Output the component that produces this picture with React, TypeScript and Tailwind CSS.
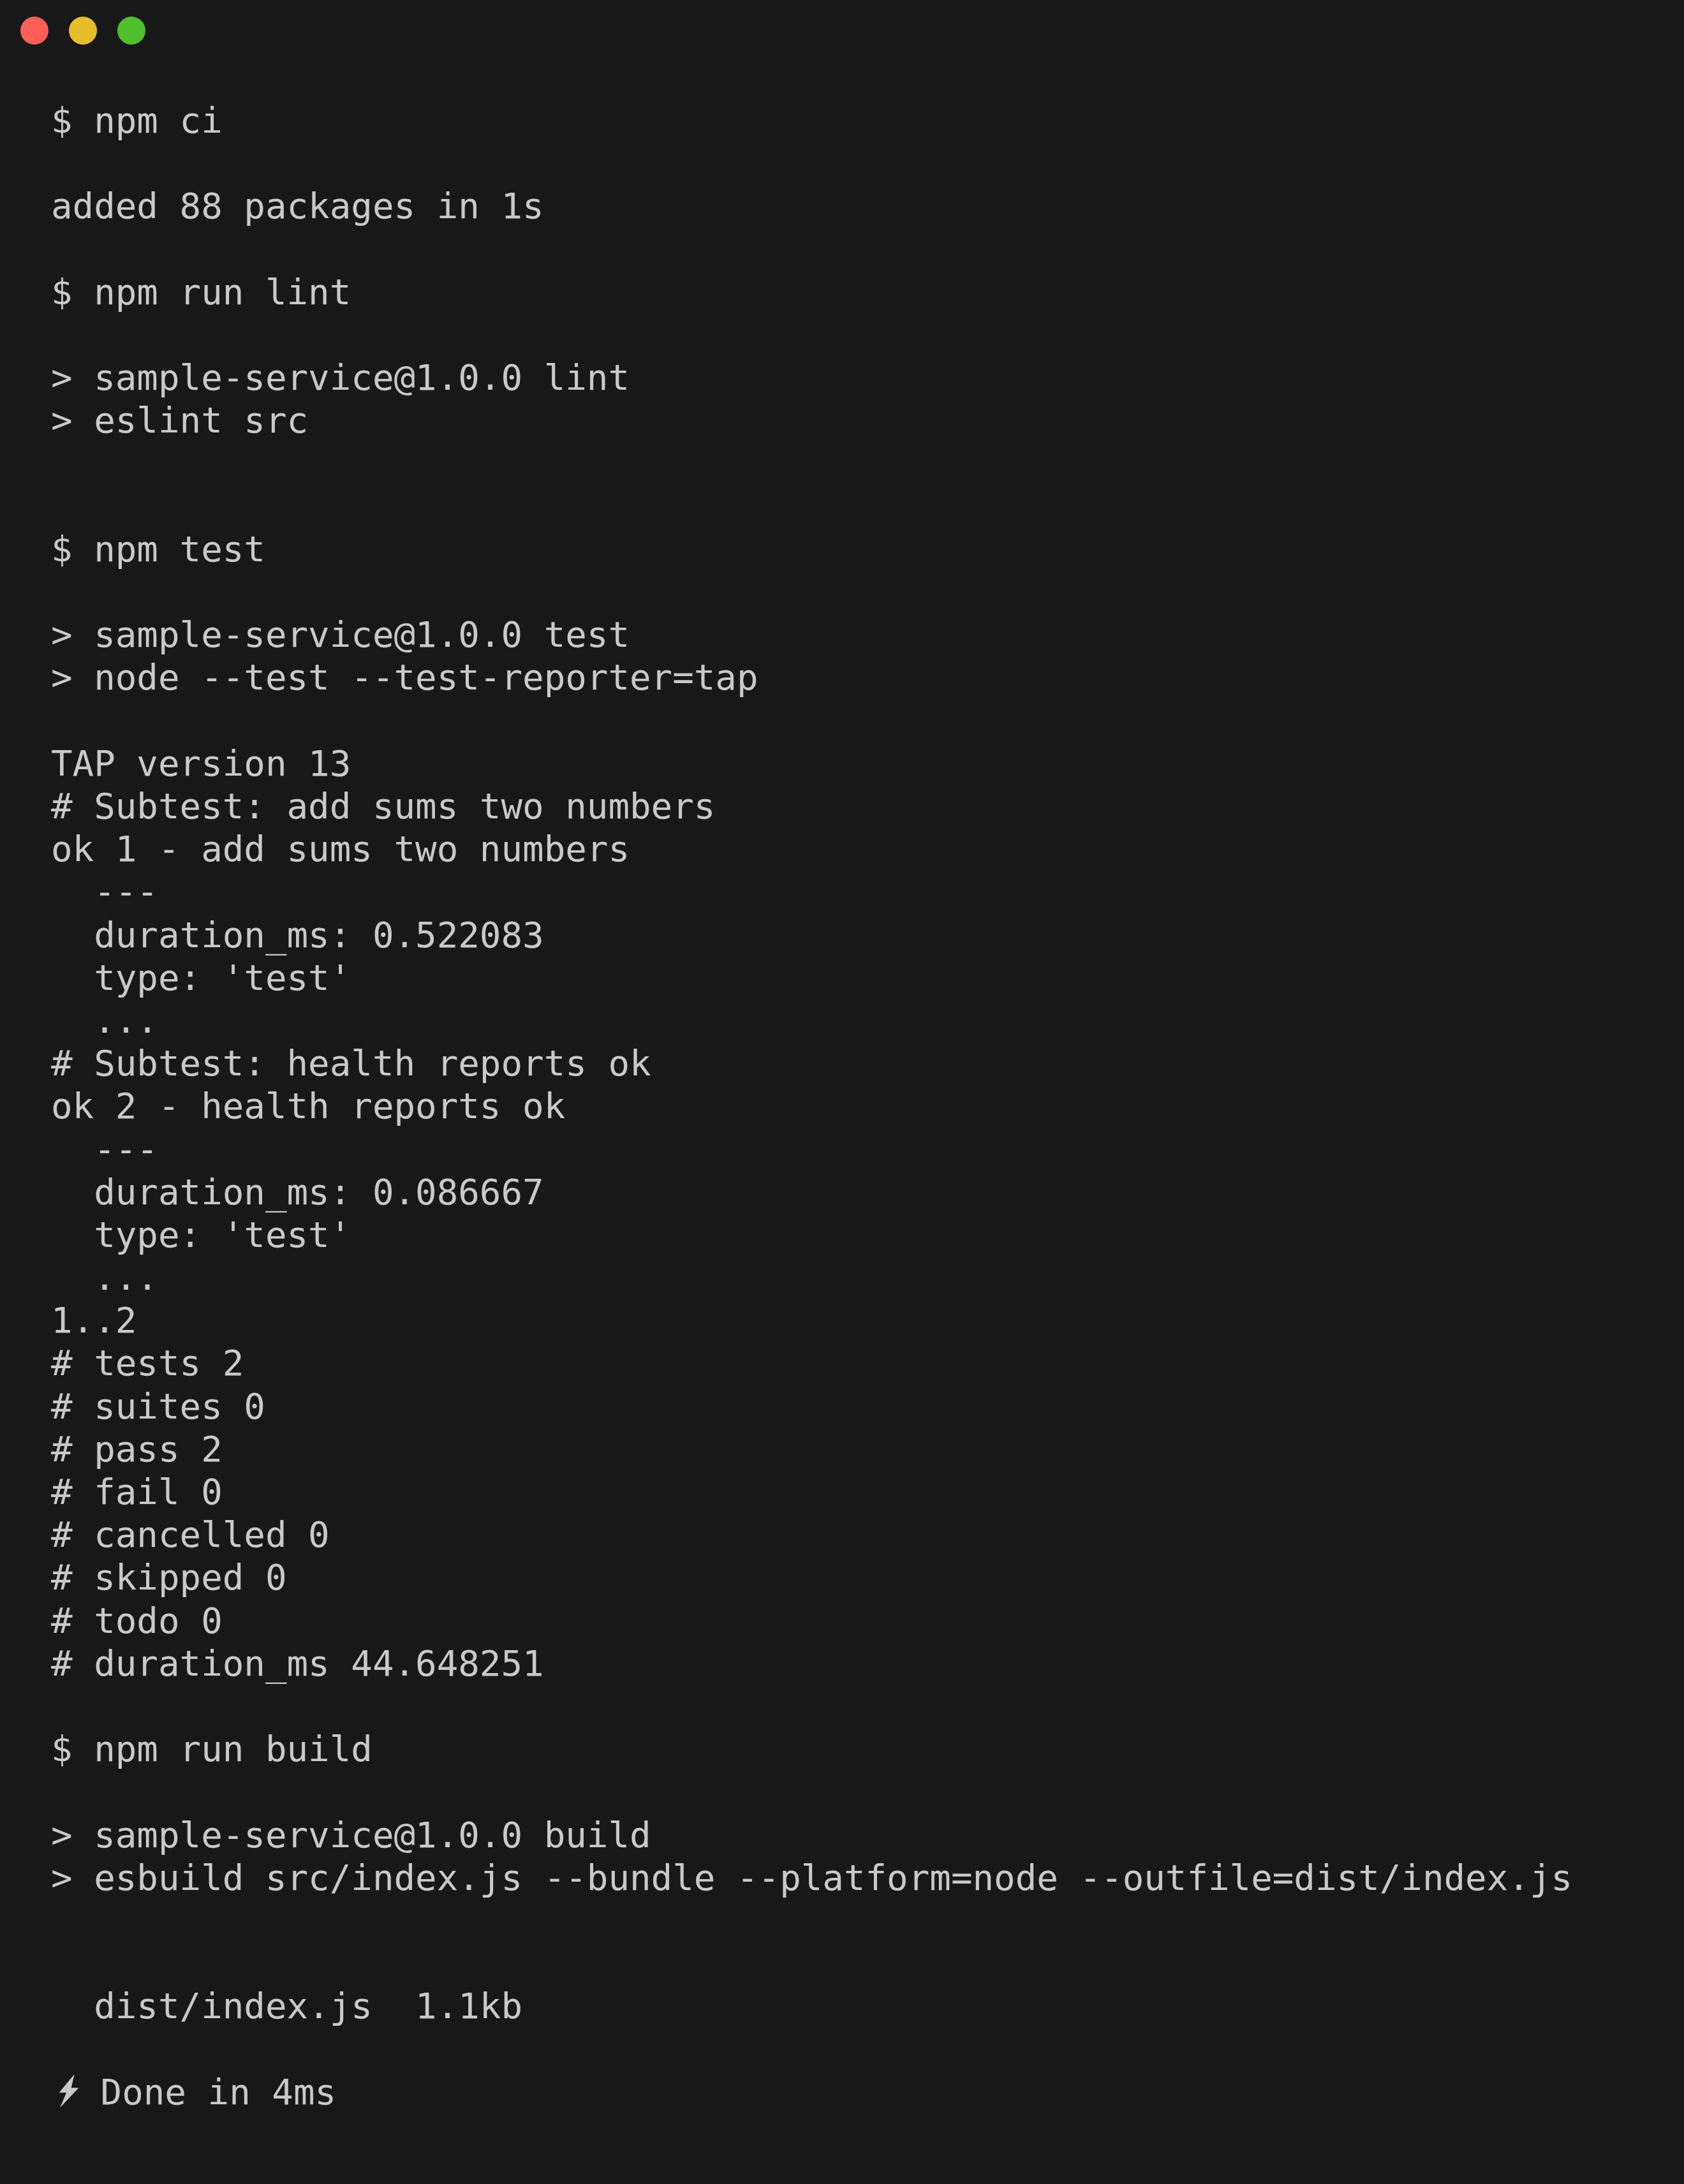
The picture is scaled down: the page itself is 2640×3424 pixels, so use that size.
import React from "react";

const lines: string[] = [
  "$ npm ci",
  "",
  "added 88 packages in 1s",
  "",
  "$ npm run lint",
  "",
  "> sample-service@1.0.0 lint",
  "> eslint src",
  "",
  "",
  "$ npm test",
  "",
  "> sample-service@1.0.0 test",
  "> node --test --test-reporter=tap",
  "",
  "TAP version 13",
  "# Subtest: add sums two numbers",
  "ok 1 - add sums two numbers",
  "  ---",
  "  duration_ms: 0.522083",
  "  type: 'test'",
  "  ...",
  "# Subtest: health reports ok",
  "ok 2 - health reports ok",
  "  ---",
  "  duration_ms: 0.086667",
  "  type: 'test'",
  "  ...",
  "1..2",
  "# tests 2",
  "# suites 0",
  "# pass 2",
  "# fail 0",
  "# cancelled 0",
  "# skipped 0",
  "# todo 0",
  "# duration_ms 44.648251",
  "",
  "$ npm run build",
  "",
  "> sample-service@1.0.0 build",
  "> esbuild src/index.js --bundle --platform=node --outfile=dist/index.js",
  "",
  "",
  "  dist/index.js  1.1kb",
  "",
];

function Bolt() {
  return (
    <svg
      width="44"
      height="56"
      viewBox="0 0 44 56"
      className="inline-block align-[-7px]"
    >
      <polygon
        points="36.7,1.7 12.7,30.7 24,30.7 14.3,54 43.3,23.3 31.7,23.3"
        fill="#c9c9c9"
      />
    </svg>
  );
}

export default function App() {
  return (
    <div className="min-h-[3424px] w-full bg-[#181818]">
      <div className="flex gap-[32px] pl-[32px] pt-[26px]">
        <div className="h-[44px] w-[44px] rounded-full bg-[#ff5f57]" />
        <div className="h-[44px] w-[44px] rounded-full bg-[#e6be2b]" />
        <div className="h-[44px] w-[44px] rounded-full bg-[#50bf2d]" />
      </div>
      <div
        className="mt-[85px] pl-[80px] text-[#c9c9c9] text-[55.8px] leading-[67.2px] whitespace-pre"
        style={{ fontFamily: '"DejaVu Sans Mono", "Liberation Mono", monospace' }}
      >
        {lines.map((l, i) => (
          <div key={i} className="h-[67.2px]">
            {l}
          </div>
        ))}
        <div className="h-[67.2px]">
          <Bolt />
          {" Done in 4ms"}
        </div>
      </div>
    </div>
  );
}
